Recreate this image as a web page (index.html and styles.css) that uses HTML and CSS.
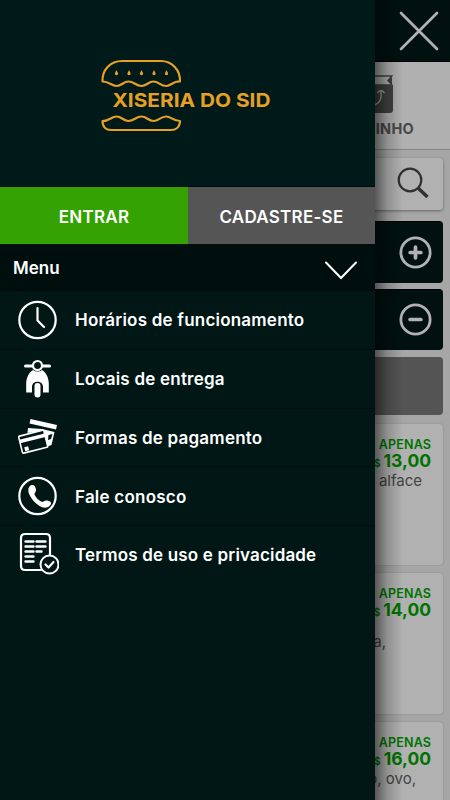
FILE: index.html
```html
<!DOCTYPE html>
<html lang="pt-BR">
<head>
<meta charset="utf-8">
<title>Xiseria do Sid</title>
<link rel="stylesheet" href="styles.css">
</head>
<body>
<main class="page">
  <header class="topbar">
    <svg class="close" viewBox="0 0 40 40"><path d="M2 2L38 38M38 2L2 38"/></svg>
  </header>
  <section class="tab">
    <svg class="bag" viewBox="0 0 36 38"><path d="M0 10h36v25q0 3-3 3H0z" fill="#424242"/><path d="M1 1H35L31 5.500 35 10H1z" fill="none" stroke="#424242" stroke-width="1.300"/><path d="M35 1L30 5.500 35 10z" fill="#424242"/><path d="M9 28c6 5 15 1 15-7v-5M20.500 18q3.500-5 7 0" fill="none" stroke="#a6a6a6" stroke-width="1.400"/></svg>
    <span class="tab-label">CARRINHO</span>
  </section>
  <section class="content">
    <div class="search"><svg viewBox="0 0 32 32"><circle cx="13" cy="13" r="11.300"/><path class="handle" d="M21 21l9.500 9"/></svg></div>
    <div class="group"><svg viewBox="0 0 32 32"><circle cx="16" cy="16" r="14.200"/><path class="sign" d="M16 10.800v10.400M10.800 16h10.400"/></svg></div>
    <div class="group second"><svg viewBox="0 0 32 32"><circle cx="16" cy="16" r="14.200"/><path class="sign" d="M10.800 16h10.400"/></svg></div>
    <div class="category"></div>
    <article class="product"><div class="only">APENAS</div><div class="price"><small>R$</small> 13,00</div><p class="p1">alface</p></article>
    <article class="product"><div class="only">APENAS</div><div class="price"><small>R$</small> 14,00</div><p class="p2">a,</p></article>
    <article class="product"><div class="only">APENAS</div><div class="price"><small>R$</small> 16,00</div><p class="p3">o, ovo,</p></article>
  </section>
</main>
<div class="shade"></div>
<aside class="drawer">
  <div class="brand">
    <svg viewBox="0 0 190 90" width="190" height="90">
      <g fill="none" stroke="#e5a025" stroke-width="2.200" stroke-linejoin="round">
        <path d="M12.500 31.500C12 20 20 11 32 11H71C82 11 90.500 20 90 31.500C83 31 81 36 76.500 36C70 36 69 31.500 63.500 31.500C58 31.500 57 36 51.500 36C46 36 44 31.500 38.500 31.500C33 31.500 32 36 26.500 36C21 36 20 31.500 12.500 31.500Z"/>
        <path d="M12.500 71C20 71 21 66.500 26.500 66.500C32 66.500 33 71 38.500 71C44 71 46 66.500 51.500 66.500C57 66.500 58 71 63.500 71C69 71 70 66.500 76.500 66.500C81 66.500 83 71 90 71C90 77 86 80 81 80H21C16 80 12.500 77 12.500 71Z"/>
      </g>
      <path fill="#e5a025" d="M26.500 20l1.700 3.500a1.700 1.700 0 1 1-3.400 0zM39 20l1.700 3.500a1.700 1.700 0 1 1-3.400 0zM51.500 20l1.700 3.500a1.700 1.700 0 1 1-3.400 0zM64 20l1.700 3.500a1.700 1.700 0 1 1-3.400 0zM76.500 20l1.700 3.500a1.700 1.700 0 1 1-3.400 0z"/>
      <text class="brand-name" x="22.500" y="57" textLength="158" lengthAdjust="spacingAndGlyphs">XISERIA DO SID</text>
    </svg>
  </div>
  <div class="actions"><a class="login"><span>ENTRAR</span></a><a class="signup"><span>CADASTRE-SE</span></a></div>
  <div class="menu-head"><span>Menu</span><svg viewBox="0 0 34 20"><path d="M2 1.500L17 17 32 1.500"/></svg></div>
  <nav>
    <a class="item"><svg viewBox="0 0 48 48"><g class="line"><circle cx="25.500" cy="24" r="18.200"/><path d="M25.500 12v12.500l6.500 6.500"/></g></svg><span>Horários de funcionamento</span></a>
    <a class="item"><svg viewBox="0 0 48 48"><g class="line"><path d="M13.500 11h7M30.500 11h7" stroke-width="3"/><circle cx="25.500" cy="10.500" r="4.500"/></g><path fill="#fff" d="M21 15q4.500 3 9 0c5 3 6.800 9 6.800 14v8.500H31V32c0-7-11-7-11 0v5.500h-5.800V29c0-5 1.800-11 6.800-14z"/><rect x="22.500" y="28" width="6" height="14.500" rx="3" fill="#fff"/></svg><span>Locais de entrega</span></a>
    <a class="item"><svg viewBox="0 0 48 48"><path fill="#fff" d="M18.500 6L45 12 44 16.500 17.500 10.500z"/><path fill="#fff" d="M16 15l14 1 12.500 3-3 13-5 2-3-16-16 2z"/><path fill="#001716" d="M36.500 22l4-1-1.500 5-3 1z"/><g transform="rotate(-14 21 28)"><rect x="8" y="20" width="26" height="17.500" rx="1" fill="#001716" stroke="#fff" stroke-width="1.600"/><path fill="#fff" d="M8 23.500h26V27H8zM11 32h4v4h-4z"/></g></svg><span>Formas de pagamento</span></a>
    <a class="item"><svg viewBox="0 0 48 48"><g class="line"><circle cx="25.500" cy="24" r="18.200"/></g><path fill="#fff" d="M17.500 14.500c3-3 6-1 6.500 3 .3 3-2.500 3.500-1 6 1.400 2.600 3.400 4.600 6 6 2.500 1.300 3-1.500 6-1 4 .5 5.500 3 2.500 5.500-3 3-8 2-13-2.300C18.500 26.700 14 18.500 17.500 14.500z"/></svg><span>Fale conosco</span></a>
    <a class="item terms"><svg viewBox="0 0 48 48"><g class="line"><path d="M30 42H14q-4 0-4-4V10q0-4 4-4H35q4 0 4 4v17"/><path stroke-width="2.400" d="M14.500 13.500h8M25.500 13.500h9M14.500 18.500h8M25.500 18.500h9M14.500 23.500h8M25.500 23.500h5M14.500 28.500h8M14.500 33.500h8"/><circle cx="38.500" cy="36.500" r="9" fill="#001716" stroke-width="2"/><path d="M34.500 36.500l3 3 5-5.500"/></g></svg><span>Termos de uso e privacidade</span></a>
  </nav>
</aside>
</body>
</html>
```

FILE: styles.css
```css
* { box-sizing: border-box; }
body { margin: 0; width: 450px; height: 800px; overflow: hidden; position: relative; font-family: Inter, "Liberation Sans", sans-serif; background: #a6a6a6; }
.page { height: 800px; overflow: hidden; }
.topbar { height: 62px; background: #001110; display: flex; justify-content: flex-end; padding: 11px 11px 0 0; border-bottom: 1px solid #000; }
.close { width: 40px; height: 40px; fill: none; stroke: #b2b2b2; stroke-width: 2.700; stroke-linecap: round; }
.tab { height: 88px; background: #b0b0b0; border-bottom: 1px solid #858585; display: flex; flex-direction: column; align-items: flex-end; padding-top: 13px; }
.bag { width: 36px; height: 38px; margin-right: 57px; }
.tab-label { margin: 7px 36px 0 0; font-size: 14.500px; line-height: 18px; font-weight: 700; letter-spacing: .3px; color: #484848; }
.content { padding: 8px 7px 0; }
.search, .group, .category, .product { border-radius: 4px; display: flex; justify-content: flex-end; }
.search { height: 52px; background: #b1b1b1; box-shadow: 0 1px 3px #666; padding: 9px 14px; }
.search svg { width: 32px; height: 32px; fill: none; stroke: #303030; stroke-width: 2.200; }
.search .handle { stroke-width: 3.500; }
.group { height: 62px; margin-top: 11px; background: #001110; align-items: center; padding-right: 11px; border-top: 1px solid #000; }
.group svg { width: 33px; height: 33px; margin-top: -1px; fill: none; stroke: #b2b2b2; stroke-width: 2.700; stroke-linecap: round; }
.group .sign { stroke-width: 3.600; }
.second { margin-top: 6px; height: 61px; }
.category { height: 58px; margin-top: 7px; background: #545454; }
.product { height: 141px; margin-top: 8px; background: #b1b1b1; box-shadow: 0 0 2px #858585; flex-direction: column; justify-content: flex-start; align-items: flex-end; padding: 13px 12px 0 0; }
.category + .product { margin-top: 9px; }
.only { font-size: 12.500px; line-height: 15px; font-weight: 600; color: #007300; letter-spacing: .2px; margin-right: -.2px; }
.price { font-size: 17.500px; line-height: 18px; font-weight: 700; color: #007300; display: flex; align-items: baseline; gap: 3px; }
.price small { font-size: 10px; line-height: 12px; }
.product p { font-size: 15px; line-height: 18px; margin: 2px 9px 0 0; color: #434343; }
.product .p2 { margin: 14px 45px 0 0; }
.product .p3 { margin-right: 15px; }
.shade { position: absolute; left: 375px; top: 0; width: 28px; height: 800px; background: linear-gradient(90deg, rgba(0,0,0,.5), rgba(0,0,0,.18) 45%, transparent); }
.drawer { position: absolute; left: 0; top: 0; width: 375px; height: 800px; background: #001716; color: #fff; font-weight: 600; }
.brand { height: 187px; padding: 50px 0 0 90px; border-bottom: 1px solid #000c0c; background: #001a1a; }
.brand svg { display: block; }
.brand-name { font-size: 19px; font-weight: 700; fill: #e5a025; }
.actions { display: flex; height: 57px; font-size: 17px; letter-spacing: .25px; }
.actions a { display: flex; align-items: center; justify-content: center; padding-top: 2px; }
.login { width: 188px; background: #34a203; }
.signup { width: 187px; background: #555; }
.menu-head { height: 47px; background: #000f0e; border-bottom: 1px solid #000808; display: flex; justify-content: space-between; align-items: center; padding: 0 17px 0 13px; font-size: 17px; }
.menu-head span { padding-top: 2px; }
.menu-head svg { width: 34px; height: 20px; margin-top: 8px; fill: none; stroke: #fff; stroke-width: 2; stroke-linecap: round; }
.item { height: 58.800px; display: flex; align-items: center; padding-left: 12px; font-size: 17px; letter-spacing: .22px; border-bottom: 1px solid #000f0f; }
.item svg { width: 48px; height: 48px; margin-right: 15px; }
.item span { padding-top: 1px; }
.item.terms { border-bottom: 0; height: 56px; letter-spacing: .17px; }
.terms svg { margin: -4px 16px 0 -1px; }
.line { fill: none; stroke: #fff; stroke-width: 2.200; stroke-linecap: round; stroke-linejoin: round; }
```
